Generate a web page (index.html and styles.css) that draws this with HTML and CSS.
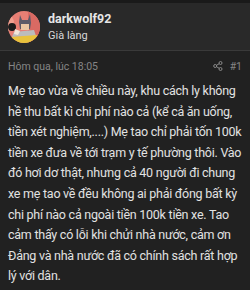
FILE: index.html
```html
<!DOCTYPE html>
<html lang="vi">
<head>
  <meta charset="UTF-8">
  <meta name="viewport" content="width=device-width, initial-scale=1.0">
  <title>darkwolf92</title>
  <link rel="stylesheet" href="styles.css">
</head>
<body>
  <div class="top-strip"></div>

  <!-- Tác giả -->
  <header class="author">
    <svg class="avatar" viewBox="0 0 32 32" width="32" height="32">
      <defs>
        <clipPath id="circle"><circle cx="16" cy="16" r="16"/></clipPath>
      </defs>
      <g clip-path="url(#circle)">
        <rect width="32" height="32" fill="#e77f74"/>
        <rect x="20" y="0" width="12" height="32" fill="#d96a63"/>
        <path d="M0 8 L3 4 L6 10 L5 18 L0 20 Z" fill="#f0a090"/>
        <circle cx="4" cy="16" r="4" fill="#1c1c1c"/>
        <path d="M12 4 L14 9 L20 9 L22 3 L23 12 L22 18 L12 18 L11 11 Z" fill="#5a5a68"/>
        <path d="M13 13 L21 13 L21 19 L13 19 Z" fill="#e9c6a4"/>
        <path d="M6 21 L26 19 L28 25 L4 26 Z" fill="#bcbcbc"/>
        <path d="M3 26 L29 24 L30 32 L2 32 Z" fill="#e8c23c"/>
        <path d="M7 18 L12 20 L10 24 L6 23 Z" fill="#f3e7d8"/>
      </g>
    </svg>
    <div class="author-info">
      <div class="username">darkwolf92</div>
      <div class="user-title">Già làng</div>
    </div>
  </header>

  <!-- Bài viết -->
  <div class="post-meta">
    <span class="post-date">Hôm qua, lúc 18:05</span>
    <span class="post-actions">
      <svg class="share-icon" viewBox="0 0 10 10" width="10" height="10">
        <circle cx="7.5" cy="2" r="1.5" fill="none" stroke="#8a8a8a" stroke-width="1"/>
        <circle cx="2.2" cy="5" r="1.5" fill="none" stroke="#8a8a8a" stroke-width="1"/>
        <circle cx="7.5" cy="8" r="1.5" fill="none" stroke="#8a8a8a" stroke-width="1"/>
        <path d="M3.5 4.3 L6.2 2.7 M3.5 5.7 L6.2 7.3" stroke="#8a8a8a" stroke-width="1"/>
      </svg>
      <span class="post-number">#1</span>
    </span>
  </div>

  <div class="post-body">
    Mẹ tao vừa về chiều này, khu cách ly không hề thu bất kì chi phí nào cả (kể cả ăn uống, tiền xét nghiệm,....) Mẹ tao chỉ phải tốn 100k tiền xe đưa về tới trạm y tế phường thôi. Vào đó hơi dơ thật, nhưng cả 40 người đi chung xe mẹ tao về đều không ai phải đóng bất kỳ chi phí nào cả ngoài tiền 100k tiền xe. Tao cảm thấy có lỗi khi chửi nhà nước, cảm ơn Đảng và nhà nước đã có chính sách rất hợp lý với dân.
  </div>
</body>
</html>
```

FILE: styles.css
```css
* {
  box-sizing: border-box;
  margin: 0;
  padding: 0;
}

body {
  font-family: Roboto, 'Noto Sans', sans-serif;
  background-color: #212121;
  color: #e2e2e2;
  width: 250px;
  height: 290px;
  overflow: hidden;
}

.top-strip {
  height: 3px;
  background-color: #1a1a1a;
}

.author {
  display: flex;
  align-items: center;
  gap: 8px;
  height: 48px;
  padding: 0 8px;
  background-color: #292929;
  border-bottom: 1px solid #3a3a3a;
}

.avatar {
  flex-shrink: 0;
}

.username {
  font-weight: bold;
  font-size: 12.5px;
  color: #e6e6e6;
  margin-bottom: 3px;
}

.user-title {
  font-size: 11px;
  color: #d8d8d8;
}

.post-meta {
  display: flex;
  justify-content: space-between;
  align-items: center;
  height: 30px;
  padding: 0 8px;
  font-size: 10.5px;
  color: #858585;
}

.post-actions {
  display: flex;
  align-items: center;
  gap: 7px;
}

.post-body {
  padding: 0 8px;
  font-size: 12.5px;
  letter-spacing: -0.25px;
  line-height: 20.6px;
}
```
